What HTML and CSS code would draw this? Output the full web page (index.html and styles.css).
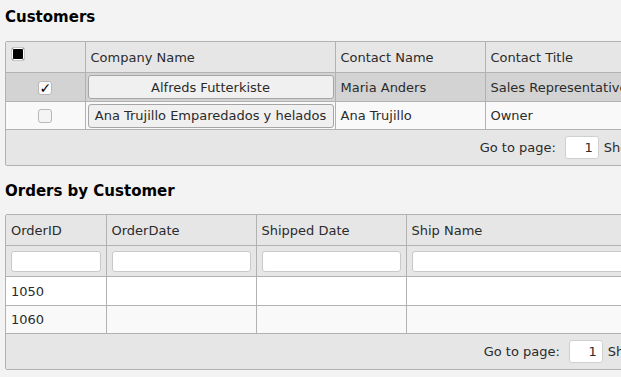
FILE: index.html
```html
<!DOCTYPE html>
<html lang="en">
<head>
    <meta charset="UTF-8">
    <title>Customers and Orders</title>
    <link rel="stylesheet" href="styles.css">
</head>
<body>
    <main class="page">
        <!-- Customers grid -->
        <section class="grid-section" aria-labelledby="customers-heading">
            <h2 id="customers-heading">Customers</h2>
            <div class="grid customers-grid">
                <table>
                    <colgroup>
                        <col style="width: 79px">
                        <col style="width: 250px">
                        <col style="width: 150px">
                        <col style="width: 200px">
                        <col style="width: 152px">
                    </colgroup>
                    <thead>
                        <tr>
                            <th class="select-all"><span class="check partial" role="checkbox" aria-checked="mixed"></span></th>
                            <th>Company Name</th>
                            <th>Contact Name</th>
                            <th>Contact Title</th>
                            <th>Country</th>
                        </tr>
                    </thead>
                    <tbody>
                        <tr class="selected">
                            <td class="select-cell"><span class="check checked" role="checkbox" aria-checked="true">&#10003;</span></td>
                            <td class="button-cell"><button type="button">Alfreds Futterkiste</button></td>
                            <td>Maria Anders</td>
                            <td>Sales Representative</td>
                            <td>Germany</td>
                        </tr>
                        <tr class="alt">
                            <td class="select-cell"><span class="check" role="checkbox" aria-checked="false"></span></td>
                            <td class="button-cell"><button type="button">Ana Trujillo Emparedados y helados</button></td>
                            <td>Ana Trujillo</td>
                            <td>Owner</td>
                            <td>Mexico</td>
                        </tr>
                    </tbody>
                </table>
                <div class="pager">
                    <label>Go to page: <input type="text" class="page-input" value="1"></label>
                    <span>Show rows:</span>
                    <span class="page-size">10</span>
                    <span class="page-info">1 - 2 of 2</span>
                </div>
            </div>
        </section>

        <!-- Orders grid -->
        <section class="grid-section" aria-labelledby="orders-heading">
            <h2 id="orders-heading">Orders by Customer</h2>
            <div class="grid orders-grid">
                <table>
                    <colgroup>
                        <col style="width: 100px">
                        <col style="width: 150px">
                        <col style="width: 150px">
                        <col style="width: 250px">
                        <col style="width: 185px">
                    </colgroup>
                    <thead>
                        <tr>
                            <th>OrderID</th>
                            <th>OrderDate</th>
                            <th>Shipped Date</th>
                            <th>Ship Name</th>
                            <th>Ship City</th>
                        </tr>
                        <tr class="filter-row">
                            <td><input type="text" aria-label="Filter OrderID"></td>
                            <td><input type="text" aria-label="Filter OrderDate"></td>
                            <td><input type="text" aria-label="Filter Shipped Date"></td>
                            <td><input type="text" aria-label="Filter Ship Name"></td>
                            <td><input type="text" aria-label="Filter Ship City"></td>
                        </tr>
                    </thead>
                    <tbody>
                        <tr>
                            <td>1050</td>
                            <td></td>
                            <td></td>
                            <td></td>
                            <td></td>
                        </tr>
                        <tr class="alt">
                            <td>1060</td>
                            <td></td>
                            <td></td>
                            <td></td>
                            <td></td>
                        </tr>
                    </tbody>
                </table>
                <div class="pager">
                    <label>Go to page: <input type="text" class="page-input" value="1"></label>
                    <span>Show rows:</span>
                    <span class="page-size">10</span>
                    <span class="page-info">1 - 2 of 2</span>
                </div>
            </div>
        </section>
    </main>
</body>
</html>
```

FILE: styles.css
```css
:root {
    --page-bg: #f3f3f3;
    --header-bg: #e6e6e6;
    --selected-bg: #d3d3d3;
    --alt-bg: #f9f9f9;
    --border: #b2b2b2;
    --text: #2b2b2b;
}

html, body {
    overflow: hidden;
}

body {
    margin: 0;
    background-color: var(--page-bg);
    color: var(--text);
    font-family: "DejaVu Sans", Verdana, sans-serif;
    font-size: 13px;
}

.page {
    padding: 0 5px;
}

h2 {
    margin: 0;
    font-size: 15px;
    line-height: 18px;
    font-weight: bold;
    color: #000;
}

.grid-section h2 {
    padding-top: 8px;
    padding-bottom: 15px;
}

.grid-section + .grid-section h2 {
    padding-top: 16px;
    padding-bottom: 14px;
}

.grid {
    width: max-content;
    border: 1px solid var(--border);
    border-radius: 2px;
    background-color: #fff;
}

.grid table {
    border-collapse: collapse;
    table-layout: fixed;
    width: auto;
}

.customers-grid table {
    width: 831px;
}

.orders-grid table {
    width: 835px;
}

.grid th,
.grid td {
    padding: 0 5px;
    text-align: left;
    font-weight: normal;
    white-space: nowrap;
    overflow: hidden;
    border-left: 1px solid var(--border);
    border-bottom: 1px solid var(--border);
}

.grid th:first-child,
.grid td:first-child {
    border-left: none;
}

.grid thead th {
    height: 30px;
    background-color: var(--header-bg);
}

.grid tbody td {
    height: 28px;
}

.grid tbody tr:last-child td {
    height: 27px;
}

.grid tr.selected td {
    background-color: var(--selected-bg);
}

.grid tr.alt td {
    background-color: var(--alt-bg);
}

.select-all {
    vertical-align: top;
}

.select-all .check {
    margin-top: 5px;
}

.select-cell {
    text-align: center !important;
}

.check {
    display: inline-block;
    box-sizing: border-box;
    width: 14px;
    height: 14px;
    border: 1px solid #b9b9b9;
    border-radius: 3px;
    background-color: #f4f4f4;
    vertical-align: middle;
    font-size: 14px;
    line-height: 12px;
    text-align: center;
    color: #000;
}

.check.checked {
    background-color: #fafafa;
}

.check.partial {
    border-color: #c8c8c8;
    background-color: #000;
    box-shadow: inset 0 0 0 1px #fff;
}

.button-cell {
    padding: 0 2px !important;
}

.button-cell button {
    display: block;
    box-sizing: border-box;
    width: 246px;
    height: 24px;
    padding: 0 2px;
    border: 1px solid #a6a6a6;
    border-radius: 3px;
    background-color: #f0f0f0;
    color: var(--text);
    font-family: inherit;
    font-size: 13px;
    white-space: nowrap;
}

.filter-row td {
    height: 30px;
    background-color: var(--header-bg);
}

.filter-row input {
    display: block;
    box-sizing: border-box;
    width: 100%;
    height: 21px;
    border: 1px solid #c9c9c9;
    border-radius: 3px;
    background-color: #fff;
}

.pager {
    display: flex;
    justify-content: flex-end;
    align-items: center;
    gap: 5px;
    height: 35px;
    padding: 0 8px;
    background-color: var(--header-bg);
}

.pager label {
    display: flex;
    align-items: center;
    gap: 9px;
}

.page-input {
    box-sizing: border-box;
    width: 34px;
    height: 23px;
    padding: 0 5px;
    border: 1px solid #d0d0d0;
    border-radius: 3px;
    background-color: #fff;
    color: var(--text);
    font-family: inherit;
    font-size: 13px;
    text-align: right;
}

.page-size {
    padding: 2px 6px;
    border: 1px solid #d0d0d0;
    border-radius: 3px;
    background-color: #fff;
}

.page-info {
    margin-left: 52px;
}
```
